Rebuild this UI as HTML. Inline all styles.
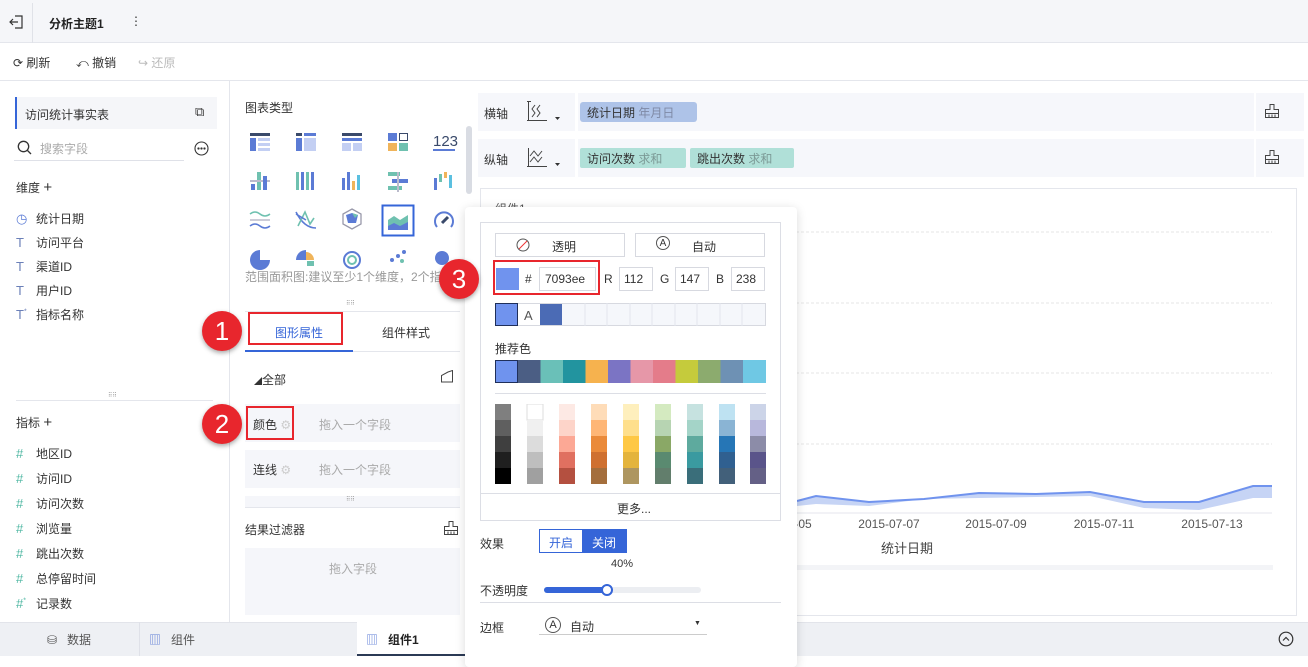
<!DOCTYPE html>
<html><head><meta charset="utf-8">
<style>
*{box-sizing:border-box;margin:0;padding:0}
body{width:1308px;height:656px;overflow:hidden;position:relative;background:#fff;font-family:"Liberation Sans","Noto Sans CJK SC",sans-serif;font-size:12px;color:#333}
.a{position:absolute}
.t{position:absolute;white-space:nowrap}
.badge{position:absolute;width:40px;height:40px;border-radius:50%;background:#e8262d;color:#fff;font-size:26px;line-height:40px;text-align:center;box-shadow:0 2px 5px rgba(0,0,0,.35);font-family:"Liberation Sans",sans-serif}
.red{position:absolute;border:2px solid #e8262d}
.fld{position:absolute;left:16px;font-size:12px;color:#333}
.ic{display:inline-block;width:20px;color:#4fb7a3;font-size:13px}
</style></head><body>
<!-- top bar -->
<div class="a" style="left:0;top:0;width:1308px;height:43px;background:#f5f6f9;border-bottom:1px solid #e4e6ec"></div>
<div class="a" style="left:32px;top:3px;width:1px;height:40px;background:#e0e2e8"></div>
<svg class="a" style="left:9px;top:15px" width="14" height="14" viewBox="0 0 14 14" fill="none" stroke="#333" stroke-width="1.2"><path d="M6 1h7v12H6M1 7h8M4 4L1 7l3 3"/></svg>
<div class="t" style="left:49px;top:15px;font-weight:bold;font-size:12px;color:#222">分析主题1</div>
<div class="t" style="left:130px;top:14px;font-size:12px">⋮</div>
<!-- toolbar -->
<div class="a" style="left:0;top:80px;width:1308px;height:1px;background:#e4e6ec"></div>
<div class="t" style="left:13px;top:54px;font-size:12px">⟳ 刷新</div>
<div class="t" style="left:76px;top:54px;font-size:12px">⤺ 撤销</div>
<div class="t" style="left:138px;top:54px;font-size:12px;color:#bbb">↪ 还原</div>
<!-- left panel -->
<div class="a" style="left:229px;top:81px;width:1px;height:541px;background:#e4e6ec"></div>
<div class="a" style="left:15px;top:97px;width:202px;height:32px;background:#f5f6f9;border-left:2px solid #3565d8"></div>
<div class="t" style="left:25px;top:106px">访问统计事实表</div>
<div class="t" style="left:195px;top:104px;font-size:13px">⧉</div>
<svg class="a" style="left:17px;top:140px" width="15" height="15" fill="none" stroke="#333" stroke-width="1.3"><circle cx="6.5" cy="6.5" r="5.2"/><path d="M10.5 10.5l3.5 3.5"/></svg>
<div class="t" style="left:40px;top:140px;color:#aaa">搜索字段</div>
<div class="a" style="left:14px;top:160px;width:170px;height:1px;background:#dfe1e8"></div>
<svg class="a" style="left:194px;top:141px" width="15" height="15" fill="none" stroke="#333" stroke-width="1.1"><circle cx="7.5" cy="7.5" r="6.5"/><circle cx="4.5" cy="7.5" r=".6"/><circle cx="7.5" cy="7.5" r=".6"/><circle cx="10.5" cy="7.5" r=".6"/></svg>
<div class="t" style="left:16px;top:179px">维度 <span style="font-size:15px">+</span></div>
<div class="fld" style="top:210px"><span class="ic" style="color:#5b7bd5">◷</span>统计日期</div>
<div class="fld" style="top:234px"><span class="ic" style="color:#6b80b8">T</span>访问平台</div>
<div class="fld" style="top:258px"><span class="ic" style="color:#6b80b8">T</span>渠道ID</div>
<div class="fld" style="top:282px"><span class="ic" style="color:#6b80b8">T</span>用户ID</div>
<div class="fld" style="top:306px"><span class="ic" style="color:#6b80b8">T<sup style="font-size:7px">*</sup></span>指标名称</div>
<div class="t" style="left:108px;top:392px;font-size:6px;color:#999">⠿⠿</div>
<div class="a" style="left:16px;top:400px;width:197px;height:1px;background:#e4e6ec"></div>
<div class="t" style="left:16px;top:414px">指标 <span style="font-size:15px">+</span></div>
<div class="fld" style="top:445px"><span class="ic">#</span>地区ID</div>
<div class="fld" style="top:470px"><span class="ic">#</span>访问ID</div>
<div class="fld" style="top:495px"><span class="ic">#</span>访问次数</div>
<div class="fld" style="top:520px"><span class="ic">#</span>浏览量</div>
<div class="fld" style="top:545px"><span class="ic">#</span>跳出次数</div>
<div class="fld" style="top:570px"><span class="ic">#</span>总停留时间</div>
<div class="fld" style="top:595px"><span class="ic">#<sup style="font-size:7px">*</sup></span>记录数</div>
<!-- bottom tabs -->
<div class="a" style="left:0;top:622px;width:1308px;height:34px;background:#eef0f4;border-top:1px solid #e2e4ea"></div>
<div class="a" style="left:139px;top:622px;width:1px;height:34px;background:#dfe1e8"></div>
<div class="a" style="left:357px;top:622px;width:108px;height:34px;background:#fff;border-bottom:2px solid #2b3a55"></div>
<div class="t" style="left:47px;top:631px;color:#555">⛁&nbsp;&nbsp; 数据</div>
<div class="t" style="left:149px;top:631px;color:#555"><span style="color:#5b7bd5">▥</span>&nbsp;&nbsp; 组件</div>
<div class="t" style="left:366px;top:631px;font-weight:bold;color:#222"><span style="color:#5b7bd5;font-weight:normal">▥</span>&nbsp;&nbsp; 组件1</div>
<svg class="a" style="left:1278px;top:631px" width="16" height="16" fill="none" stroke="#333" stroke-width="1.2"><circle cx="8" cy="8" r="6.8"/><path d="M5 9.5l3-3 3 3"/></svg>
<!-- middle panel -->
<div class="t" style="left:245px;top:99px">图表类型</div>
<div class="a" style="left:466px;top:126px;width:6px;height:68px;border-radius:3px;background:#d9dce3"></div>
<svg class="a" style="left:248px;top:130px" width="210" height="140">
<g transform="translate(2,3)"><rect width="20" height="3" fill="#3a4a6b"/><rect y="5" width="6" height="13" fill="#5b7bd5"/><rect x="8" y="5" width="12" height="3" fill="#c3cff3"/><rect x="8" y="10" width="12" height="3" fill="#c3cff3"/><rect x="8" y="15" width="12" height="3" fill="#c3cff3"/></g>
<g transform="translate(48,3)"><rect width="6" height="3" fill="#3a4a6b"/><rect x="8" width="12" height="3" fill="#5b7bd5"/><rect y="5" width="6" height="13" fill="#5b7bd5"/><rect x="8" y="5" width="12" height="13" fill="#c3cff3"/></g>
<g transform="translate(94,3)"><rect width="20" height="3" fill="#3a4a6b"/><rect y="5" width="20" height="3" fill="#5b7bd5"/><rect y="10" width="9" height="8" fill="#c3cff3"/><rect x="11" y="10" width="9" height="8" fill="#c3cff3"/></g>
<g transform="translate(140,3)"><rect width="9" height="8" fill="#5b7bd5"/><rect x="11.5" y=".5" width="8" height="7" fill="none" stroke="#3a4a6b"/><rect y="10" width="9" height="8" fill="#f0b45a"/><rect x="11" y="10" width="9" height="8" fill="#6fc1b0"/></g>
<text x="185" y="16" font-size="15" fill="#3a4a6b" font-family="Liberation Sans">123</text><rect x="185" y="19" width="22" height="2" fill="#5b7bd5"/>
<g transform="translate(2,42)"><rect x="7" y="0" width="4" height="18" fill="#6fc1b0"/><rect y="8" width="20" height="2" fill="#bbc"/><rect x="1" y="12" width="4" height="6" fill="#5b7bd5"/><rect x="13" y="4" width="4" height="14" fill="#5b7bd5"/></g>
<g transform="translate(48,42)"><rect width="3" height="18" fill="#6fc1b0"/><rect x="5" width="3" height="18" fill="#5b7bd5"/><rect x="10" width="3" height="18" fill="#6fc1b0"/><rect x="15" width="3" height="18" fill="#5b7bd5"/></g>
<g transform="translate(94,42)"><rect y="6" width="3" height="12" fill="#5b7bd5"/><rect x="5" width="3" height="18" fill="#5b7bd5"/><rect x="10" y="9" width="3" height="9" fill="#f0b45a"/><rect x="15" y="3" width="3" height="15" fill="#5bc0e0"/></g>
<g transform="translate(140,42)"><rect width="12" height="4" fill="#6fc1b0"/><rect x="4" y="7" width="16" height="4" fill="#5b7bd5"/><rect y="14" width="14" height="4" fill="#6fc1b0"/><rect x="9" width="2" height="20" fill="#bbc"/></g>
<g transform="translate(186,42)"><rect y="6" width="3" height="12" fill="#5b7bd5"/><rect x="5" y="2" width="3" height="8" fill="#6fc1b0"/><rect x="10" width="3" height="6" fill="#f0b45a"/><rect x="15" y="3" width="3" height="13" fill="#5bc0e0"/></g>
<g transform="translate(2,80)" fill="none" stroke-width="1.5"><path d="M0 4q5-4 10 0t10 0" stroke="#6fc1b0"/><path d="M0 10h20" stroke="#bbc"/><path d="M0 16q5-4 10 0t10 0" stroke="#5b7bd5"/></g>
<g transform="translate(48,80)" fill="none" stroke-width="1.6"><path d="M0 2q8 16 20 16" stroke="#5b7bd5"/><path d="M2 16l7-14 5 12 4-6" stroke="#6fc1b0"/><path d="M0 4l10 6" stroke="#5b7bd5"/></g>
<g transform="translate(94,79)"><path d="M10 0l9 5v10l-9 5-9-5V5z" fill="none" stroke="#99a" stroke-width="1.3"/><path d="M4 6l6-2 6 2-2 8h-8z" fill="#5b7bd5"/><path d="M10 4l6 2-3 3z" fill="#6fc1b0"/></g>
<rect x="134.5" y="75.5" width="31" height="30" fill="none" stroke="#3565d8" stroke-width="2"/>
<g transform="translate(140,82)"><path d="M0 8l6-4 6 4 8-5v15H0z" fill="#6fc1b0"/><path d="M0 14l6-3 6 3 8-4v8H0z" fill="#5b7bd5"/></g>
<g transform="translate(186,80)" fill="none"><path d="M3 17A9 9 0 1 1 17 17" stroke="#5b7bd5" stroke-width="2"/><path d="M8 13l6-6" stroke="#3a4a6b" stroke-width="3"/></g>
<g transform="translate(2,120)"><path d="M10 10V0A10 10 0 1 0 20 10z" fill="#5b7bd5"/></g>
<g transform="translate(48,120)"><path d="M10 10V0A10 10 0 0 0 0 10z" fill="#5b7bd5"/><path d="M10 10V2A8 8 0 0 1 18 10z" fill="#f0b45a"/><rect x="11" y="11" width="7" height="5" fill="#6fc1b0"/></g>
<g transform="translate(94,120)" fill="none" stroke-width="2"><circle cx="10" cy="10" r="8" stroke="#5b7bd5"/><circle cx="10" cy="10" r="4" stroke="#6fc1b0"/></g>
<g transform="translate(140,120)" fill="#5b7bd5"><circle cx="16" cy="2" r="2"/><circle cx="10" cy="6" r="2"/><circle cx="4" cy="10" r="2"/><circle cx="14" cy="11" r="2" fill="#6fc1b0"/></g>
<g transform="translate(186,120)"><circle cx="8" cy="8" r="7" fill="#5b7bd5"/></g>
</svg>
<div class="t" style="left:245px;top:268px;color:#999;font-size:12px;width:220px;overflow:hidden">范围面积图:建议至少1个维度，2个指标</div>
<div class="t" style="left:346px;top:300px;font-size:6px;color:#999">⠿⠿</div>
<div class="a" style="left:245px;top:311px;width:215px;height:1px;background:#e4e6ec"></div>
<div class="t" style="left:275px;top:324px;color:#3565d8">图形属性</div>
<div class="t" style="left:382px;top:324px;color:#333">组件样式</div>
<div class="a" style="left:245px;top:350px;width:108px;height:2px;background:#3565d8"></div>
<div class="a" style="left:353px;top:351px;width:107px;height:1px;background:#e4e6ec"></div>
<div class="t" style="left:254px;top:371px"><span style="font-size:8px">◢</span>全部</div>
<svg class="a" style="left:440px;top:370px" width="14" height="13" fill="none" stroke="#444"><path d="M1.5 12V5.5L8 2l4.5-1.5V12z"/></svg>
<div class="a" style="left:245px;top:404px;width:215px;height:38px;background:#f5f6fa"></div>
<div class="t" style="left:253px;top:416px">颜色 <span style="color:#ccc">⚙</span></div>
<div class="t" style="left:319px;top:416px;color:#aaa">拖入一个字段</div>
<div class="a" style="left:245px;top:450px;width:215px;height:38px;background:#f5f6fa"></div>
<div class="t" style="left:253px;top:461px">连线 <span style="color:#ccc">⚙</span></div>
<div class="t" style="left:319px;top:461px;color:#aaa">拖入一个字段</div>
<div class="a" style="left:245px;top:496px;width:215px;height:12px;background:#f5f6fa;border-bottom:1px solid #e4e6ec"></div>
<div class="t" style="left:346px;top:496px;font-size:6px;color:#999">⠿⠿</div>
<div class="t" style="left:245px;top:521px">结果过滤器</div>
<svg class="a" style="left:444px;top:521px" width="14" height="14" fill="none" stroke="#444"><path d="M5 .5h4v5h4.5v8H.5v-8H5zM.5 9.5h13M4 13.5v-3M7 13.5v-3M10 13.5v-3"/></svg>
<div class="a" style="left:245px;top:548px;width:215px;height:67px;background:#f5f6fa"></div>
<div class="t" style="left:329px;top:560px;color:#aaa">拖入字段</div>
<!-- axis rows -->
<div class="a" style="left:478px;top:93px;width:826px;height:38px;background:#f6f7fb"></div>
<div class="a" style="left:478px;top:139px;width:826px;height:38px;background:#f6f7fb"></div>
<div class="a" style="left:575px;top:93px;width:3px;height:84px;background:#fff"></div>
<div class="a" style="left:1254px;top:93px;width:2px;height:84px;background:#fff"></div>
<div class="t" style="left:484px;top:105px;font-size:12px">横轴</div>
<div class="t" style="left:484px;top:151px;font-size:12px">纵轴</div>
<svg class="a" style="left:526px;top:101px" width="38" height="22" fill="none" stroke="#444" stroke-width="1"><path d="M2.5 1v18M1 19.5h20M1 .5h4"/><path d="M9 4l-3 4 3 4-3 4M14 4l-3 4 3 4-3 4"/><path d="M29 16h5l-2.5 3z" fill="#333" stroke="none"/></svg>
<svg class="a" style="left:526px;top:147px" width="38" height="22" fill="none" stroke="#444" stroke-width="1"><path d="M2.5 1v18M1 19.5h20"/><path d="M4 9l4-5 4 5 4-5M4 15l4-5 4 5 4-5"/><path d="M29 16h5l-2.5 3z" fill="#333" stroke="none"/></svg>
<div class="a" style="left:580px;top:102px;width:117px;height:20px;background:#aec3e8;border-radius:3px"></div>
<div class="t" style="left:587px;top:104px">统计日期 <span style="color:#7f8aa6">年月日</span></div>
<div class="a" style="left:580px;top:148px;width:106px;height:20px;background:#b0e0d8;border-radius:2px"></div>
<div class="t" style="left:587px;top:150px">访问次数 <span style="color:#7c9a96">求和</span></div>
<div class="a" style="left:690px;top:148px;width:104px;height:20px;background:#b0e0d8;border-radius:2px"></div>
<div class="t" style="left:697px;top:150px">跳出次数 <span style="color:#7c9a96">求和</span></div>
<svg class="a" style="left:1265px;top:104px" width="14" height="14" fill="none" stroke="#444"><path d="M5 .5h4v5h4.5v8H.5v-8H5zM.5 9.5h13M4 13.5v-3M7 13.5v-3M10 13.5v-3"/></svg>
<svg class="a" style="left:1265px;top:150px" width="14" height="14" fill="none" stroke="#444"><path d="M5 .5h4v5h4.5v8H.5v-8H5zM.5 9.5h13M4 13.5v-3M7 13.5v-3M10 13.5v-3"/></svg>
<!-- chart -->
<div class="a" style="left:480px;top:188px;width:817px;height:428px;border:1px solid #e4e6ec"></div>
<div class="t" style="left:495px;top:200px;color:#555">组件1</div>
<svg class="a" style="left:480px;top:188px" width="816" height="428">
<g stroke="#e6e6e6" stroke-dasharray="3,2"><path d="M316 44H792M316 115H792M316 185H792M316 256H792"/></g>
<path d="M317 313L336 308L389 314L444 311L499 305L556 306L610 304L664 314L719 314L773 298L792 298L792 310L773 310L719 322L664 320L610 308L556 309L499 310L444 311L389 318L336 316L317 318Z" fill="#c6d4f5"/>
<path d="M317 313L336 308L389 314L444 311L499 305L556 306L610 304L664 314L719 314L773 298L792 298" fill="none" stroke="#7093ee" stroke-width="2"/>
<path d="M316 325H792" stroke="#e4e6ec"/>
<g font-size="12" fill="#555" font-family="Liberation Sans" text-anchor="middle"><text x="323" y="340">-05</text><text x="409" y="340">2015-07-07</text><text x="516" y="340">2015-07-09</text><text x="624" y="340">2015-07-11</text><text x="732" y="340">2015-07-13</text></g>
<text x="427" y="365" font-size="13" fill="#444" text-anchor="middle" font-family="Liberation Sans,Noto Sans CJK SC,sans-serif">统计日期</text>
<rect x="316" y="377" width="477" height="5" fill="#f3f4f7"/>
</svg>
<!-- popup -->
<div class="a" style="left:465px;top:207px;width:332px;height:460px;background:#fff;border-radius:4px;box-shadow:0 2px 10px rgba(0,0,0,.15)"></div>
<div class="a" style="left:480px;top:222px;width:301px;height:299px;border:1px solid #dcdee5"></div>
<div class="a" style="left:495px;top:233px;width:130px;height:24px;border:1px solid #d7d9e0"></div>
<svg class="a" style="left:516px;top:238px" width="14" height="14" fill="none"><circle cx="7" cy="7" r="6" stroke="#555"/><path d="M3 11L11 3" stroke="#e33"/></svg>
<div class="t" style="left:552px;top:238px">透明</div>
<div class="a" style="left:635px;top:233px;width:130px;height:24px;border:1px solid #d7d9e0"></div>
<div class="t" style="left:656px;top:236px;width:14px;height:14px;border:1px solid #555;border-radius:50%;font-size:10px;line-height:13px;text-align:center">A</div>
<div class="t" style="left:692px;top:238px">自动</div>
<div class="a" style="left:496px;top:268px;width:23px;height:22px;background:#7093ee"></div>
<div class="t" style="left:525px;top:272px">#</div>
<div class="a" style="left:539px;top:267px;width:57px;height:24px;border:1px solid #d7d9e0"></div>
<div class="t" style="left:545px;top:272px">7093ee</div>
<div class="t" style="left:604px;top:272px">R</div>
<div class="a" style="left:619px;top:267px;width:34px;height:24px;border:1px solid #d7d9e0"></div>
<div class="t" style="left:624px;top:272px">112</div>
<div class="t" style="left:660px;top:272px">G</div>
<div class="a" style="left:675px;top:267px;width:34px;height:24px;border:1px solid #d7d9e0"></div>
<div class="t" style="left:680px;top:272px">147</div>
<div class="t" style="left:716px;top:272px">B</div>
<div class="a" style="left:731px;top:267px;width:34px;height:24px;border:1px solid #d7d9e0"></div>
<div class="t" style="left:736px;top:272px">238</div>
<svg class="a" style="left:495px;top:303px" width="271" height="23">
<rect x=".5" y=".5" width="270" height="22" fill="#f5f7fb" stroke="#d7d9e0"/>
<g stroke="#e2e5ec"><path d="M90 0v23M112 0v23M135 0v23M157 0v23M180 0v23M202 0v23M225 0v23M247 0v23"/></g>
<rect x=".5" y=".5" width="22" height="22" fill="#7093ee" stroke="#1f2f5a"/>
<rect x="23" y="1" width="22" height="21" fill="#fff"/>
<text x="29" y="17" font-size="13" fill="#555" font-family="Liberation Sans">A</text>
<rect x="45" y="1" width="22" height="21" fill="#4b6bb5"/>
</svg>
<div class="t" style="left:495px;top:340px">推荐色</div>
<svg class="a" style="left:495px;top:360px" width="271" height="23">
<g><rect x="0" width="23" height="23" fill="#6f93ee"/><rect x="23" width="22.5" height="23" fill="#4b5e84"/><rect x="45.5" width="22.5" height="23" fill="#6ac0b8"/><rect x="68" width="22.5" height="23" fill="#22949f"/><rect x="90.5" width="22.5" height="23" fill="#f6b24e"/><rect x="113" width="22.5" height="23" fill="#7b74c4"/><rect x="135.5" width="22.5" height="23" fill="#e697a8"/><rect x="158" width="22.5" height="23" fill="#e47c8a"/><rect x="180.5" width="22.5" height="23" fill="#c5cb3c"/><rect x="203" width="22.5" height="23" fill="#8cab6e"/><rect x="225.5" width="22.5" height="23" fill="#6e91b4"/><rect x="248" width="23" height="23" fill="#6fc8e4"/></g>
<rect x=".5" y=".5" width="22" height="22" fill="none" stroke="#1f2f5a"/>
</svg>
<div class="a" style="left:495px;top:393px;width:271px;height:1px;background:#dcdee5"></div>
<svg class="a" style="left:495px;top:404px" width="271" height="80">
<g transform="translate(0,0)"><rect width="16" height="16" fill="#7f7f7f"/><rect y="16" width="16" height="16" fill="#5f5f5f"/><rect y="32" width="16" height="16" fill="#3f3f3f"/><rect y="48" width="16" height="16" fill="#1f1f1f"/><rect y="64" width="16" height="16" fill="#000"/></g>
<g transform="translate(32,0)"><rect width="16" height="16" fill="#fff" stroke="#ddd"/><rect y="16" width="16" height="16" fill="#f0f0f0"/><rect y="32" width="16" height="16" fill="#dcdcdc"/><rect y="48" width="16" height="16" fill="#bebebe"/><rect y="64" width="16" height="16" fill="#a0a0a0"/></g>
<g transform="translate(64,0)"><rect width="16" height="16" fill="#fde9e4"/><rect y="16" width="16" height="16" fill="#fdd4c9"/><rect y="32" width="16" height="16" fill="#fca895"/><rect y="48" width="16" height="16" fill="#e07060"/><rect y="64" width="16" height="16" fill="#b45040"/></g>
<g transform="translate(96,0)"><rect width="16" height="16" fill="#fedcb8"/><rect y="16" width="16" height="16" fill="#feb676"/><rect y="32" width="16" height="16" fill="#ea8a3a"/><rect y="48" width="16" height="16" fill="#cf7030"/><rect y="64" width="16" height="16" fill="#a46e3c"/></g>
<g transform="translate(128,0)"><rect width="16" height="16" fill="#feefbd"/><rect y="16" width="16" height="16" fill="#fedf8c"/><rect y="32" width="16" height="16" fill="#fec845"/><rect y="48" width="16" height="16" fill="#e4b43c"/><rect y="64" width="16" height="16" fill="#ae9660"/></g>
<g transform="translate(160,0)"><rect width="16" height="16" fill="#d4eac0"/><rect y="16" width="16" height="16" fill="#b7d4b2"/><rect y="32" width="16" height="16" fill="#8aa866"/><rect y="48" width="16" height="16" fill="#5a8a70"/><rect y="64" width="16" height="16" fill="#627e6c"/></g>
<g transform="translate(192,0)"><rect width="16" height="16" fill="#c6e2e0"/><rect y="16" width="16" height="16" fill="#a4d4c8"/><rect y="32" width="16" height="16" fill="#5eaa9e"/><rect y="48" width="16" height="16" fill="#3a9aa0"/><rect y="64" width="16" height="16" fill="#3a6e7a"/></g>
<g transform="translate(224,0)"><rect width="16" height="16" fill="#bee2f2"/><rect y="16" width="16" height="16" fill="#8ab4d4"/><rect y="32" width="16" height="16" fill="#2676b6"/><rect y="48" width="16" height="16" fill="#306090"/><rect y="64" width="16" height="16" fill="#42607a"/></g>
<g transform="translate(255,0)"><rect width="16" height="16" fill="#ccd4e8"/><rect y="16" width="16" height="16" fill="#b8b8dc"/><rect y="32" width="16" height="16" fill="#8c8ca8"/><rect y="48" width="16" height="16" fill="#5a548a"/><rect y="64" width="16" height="16" fill="#646086"/></g>
</svg>
<div class="a" style="left:480px;top:493px;width:301px;height:1px;background:#dcdee5"></div>
<div class="t" style="left:617px;top:500px">更多...</div>
<div class="t" style="left:480px;top:535px">效果</div>
<div class="a" style="left:539px;top:529px;width:88px;height:24px;border:1px solid #3565d8"></div>
<div class="a" style="left:582px;top:529px;width:45px;height:24px;background:#3565d8"></div>
<div class="t" style="left:549px;top:534px;color:#3565d8">开启</div>
<div class="t" style="left:592px;top:534px;color:#fff">关闭</div>
<div class="t" style="left:611px;top:558px;font-size:11px">40%</div>
<div class="t" style="left:480px;top:582px">不透明度</div>
<div class="a" style="left:544px;top:587px;width:157px;height:6px;border-radius:3px;background:#eceef2"></div>
<div class="a" style="left:544px;top:587px;width:63px;height:6px;border-radius:3px;background:#3565d8"></div>
<div class="a" style="left:601px;top:584px;width:12px;height:12px;border-radius:50%;background:#fff;border:2px solid #3565d8"></div>
<div class="a" style="left:480px;top:602px;width:301px;height:1px;background:#dcdee5"></div>
<div class="t" style="left:480px;top:619px">边框</div>
<div class="t" style="left:545px;top:617px;width:16px;height:16px;border:1px solid #555;border-radius:50%;font-size:11px;line-height:15px;text-align:center">A</div>
<div class="t" style="left:570px;top:618px">自动</div>
<div class="t" style="left:694px;top:620px;font-size:7px">▼</div>
<div class="a" style="left:539px;top:634px;width:168px;height:1px;background:#ccc"></div>
<!-- annotations -->
<div class="red" style="left:248px;top:312px;width:95px;height:33px"></div>
<div class="red" style="left:246px;top:406px;width:48px;height:34px"></div>
<div class="red" style="left:493px;top:260px;width:107px;height:35px"></div>
<div class="badge" style="left:202px;top:311px">1</div>
<div class="badge" style="left:202px;top:404px">2</div>
<div class="badge" style="left:439px;top:259px">3</div>
</body></html>
